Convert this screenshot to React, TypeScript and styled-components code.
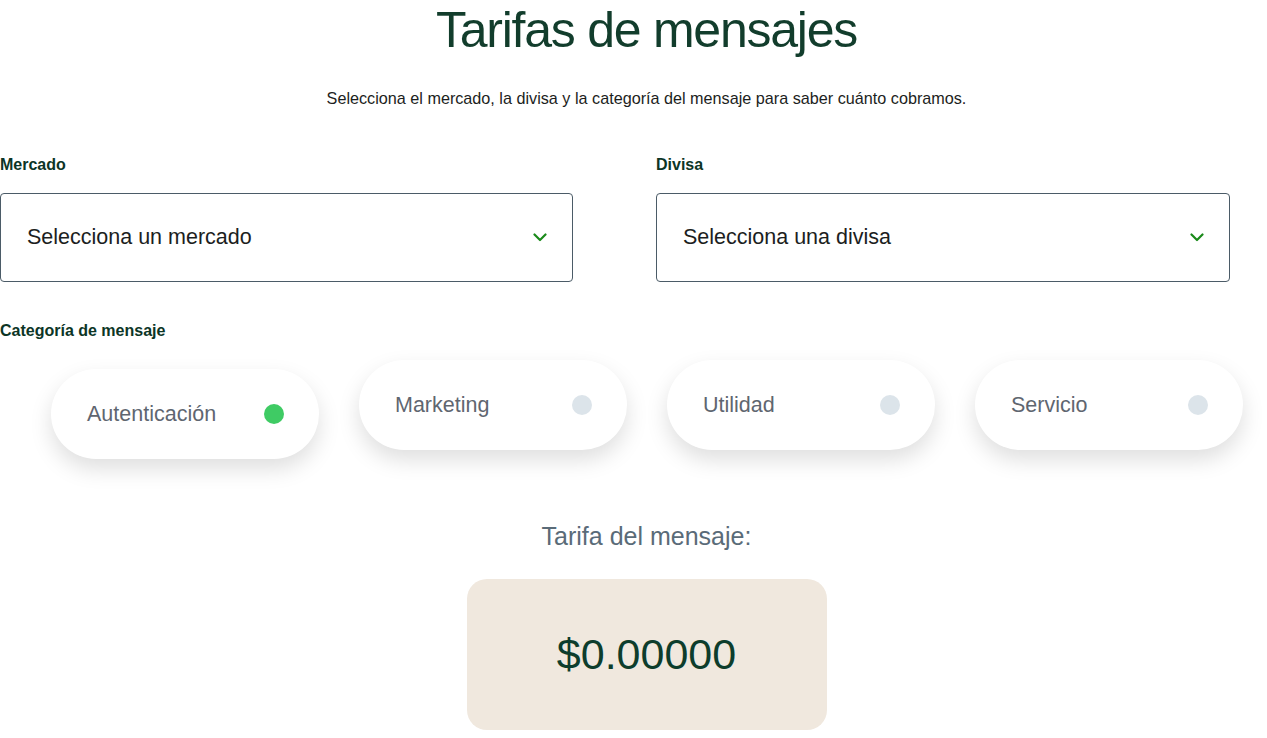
import React from "react";
import styled, { createGlobalStyle } from "styled-components";

const GlobalStyle = createGlobalStyle`
  html, body {
    margin: 0;
    padding: 0;
    background: #ffffff;
    overflow: hidden;
  }
  body {
    font-family: "Liberation Sans", Arial, sans-serif;
  }
`;

const categories = ["Autenticación", "Marketing", "Utilidad", "Servicio"];

const Chevron = () => (
  <svg width="14" height="9" viewBox="0 0 14 9" fill="none">
    <path d="M1.5 1.5L7 7L12.5 1.5" stroke="#1a8a1a" strokeWidth="2.2" strokeLinecap="round" strokeLinejoin="round" />
  </svg>
);

const App = () => {
  const selected = "Autenticación";

  return (
    <Page>
      <GlobalStyle />
      <Title>Tarifas de mensajes</Title>
      <Intro>
        Selecciona el mercado, la divisa y la categoría del mensaje para saber cuánto cobramos.
      </Intro>

      <SelectRow>
        <Field>
          <Label>Mercado</Label>
          <Select>
            <span>Selecciona un mercado</span>
            <Chevron />
          </Select>
        </Field>
        <Field>
          <Label>Divisa</Label>
          <Select>
            <span>Selecciona una divisa</span>
            <Chevron />
          </Select>
        </Field>
      </SelectRow>

      <Label className="category">Categoría de mensaje</Label>
      <PillRow>
        {categories.map((name) => (
          <Pill key={name} $active={name === selected}>
            <span>{name}</span>
            <Dot $active={name === selected} />
          </Pill>
        ))}
      </PillRow>

      <RateLabel>Tarifa del mensaje:</RateLabel>
      <RateBox>$0.00000</RateBox>
    </Page>
  );
};

export default App;

const Page = styled.div`
  width: 1293px;
  display: flex;
  flex-direction: column;

  .category {
    margin-top: 39px;
  }
`;

const Title = styled.h1`
  margin: 0;
  font-size: 50px;
  line-height: 60px;
  font-weight: 400;
  letter-spacing: -1.25px;
  color: #123d2c;
  text-align: center;
`;

const Intro = styled.p`
  margin: 28px 0 0;
  font-size: 16.2px;
  line-height: 20px;
  color: #1c1e21;
  text-align: center;
`;

const SelectRow = styled.div`
  display: grid;
  grid-template-columns: 573px 574px;
  column-gap: 83px;
  margin-top: 47px;
`;

const Field = styled.div`
  display: flex;
  flex-direction: column;
`;

const Label = styled.div`
  font-size: 16px;
  line-height: 20px;
  font-weight: 700;
  color: #0c3526;
`;

const Select = styled.div`
  margin-top: 18px;
  height: 89px;
  box-sizing: border-box;
  border: 1px solid #4b5b67;
  border-radius: 4px;
  display: flex;
  align-items: center;
  justify-content: space-between;
  padding: 0 25px 0 26px;
  font-size: 21.5px;
  color: #1c1e21;
`;

const PillRow = styled.div`
  display: flex;
  gap: 40px;
  padding-left: 51px;
  margin-top: 19px;
  align-items: flex-start;
`;

const Pill = styled.div<{ $active: boolean }>`
  width: 268px;
  height: 90px;
  box-sizing: border-box;
  border-radius: 45px;
  background: #ffffff;
  box-shadow: 0 10px 22px rgba(0, 0, 0, 0.13);
  display: flex;
  align-items: center;
  justify-content: space-between;
  padding: 0 35px 0 36px;
  font-size: 21.5px;
  color: #5f6670;
  transform: translateY(${(p) => (p.$active ? "9px" : "0")});
`;

const Dot = styled.span<{ $active: boolean }>`
  width: 20px;
  height: 20px;
  border-radius: 50%;
  background: ${(p) => (p.$active ? "#3fcb64" : "#dce4ea")};
`;

const RateLabel = styled.div`
  margin-top: 71px;
  font-size: 25px;
  line-height: 30px;
  color: #5a6b78;
  text-align: center;
`;

const RateBox = styled.div`
  margin: 28px auto 0;
  width: 360px;
  height: 151px;
  border-radius: 20px;
  background: #f0e8de;
  display: flex;
  align-items: center;
  justify-content: center;
  font-size: 43px;
  color: #0d3d2c;
`;
